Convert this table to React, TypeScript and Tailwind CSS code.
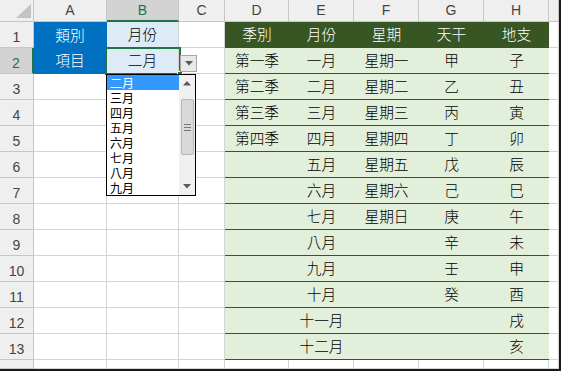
import React from 'react';

const COLS = ['A', 'B', 'C', 'D', 'E', 'F', 'G', 'H', ''];

const TABLE: string[][] = [
  ['季別', '月份', '星期', '天干', '地支'],
  ['第一季', '一月', '星期一', '甲', '子'],
  ['第二季', '二月', '星期二', '乙', '丑'],
  ['第三季', '三月', '星期三', '丙', '寅'],
  ['第四季', '四月', '星期四', '丁', '卯'],
  ['', '五月', '星期五', '戊', '辰'],
  ['', '六月', '星期六', '己', '巳'],
  ['', '七月', '星期日', '庚', '午'],
  ['', '八月', '', '辛', '未'],
  ['', '九月', '', '壬', '申'],
  ['', '十月', '', '癸', '酉'],
  ['', '十一月', '', '', '戌'],
  ['', '十二月', '', '', '亥'],
];

const LIST = ['二月', '三月', '四月', '五月', '六月', '七月', '八月', '九月'];

function cellFor(r: number, c: number) {
  // r: 1..14 sheet row, c: 0..8 column index (A..I)
  if (r <= 13 && c >= 3 && c <= 7) {
    const text = TABLE[r - 1][c - 3];
    if (r === 1) {
      return { cls: 'bg-[#375623] text-white border-b border-[#375623]', text };
    }
    return { cls: 'bg-[#E2EFDA] text-black border-b border-[#375623]', text };
  }
  if (c === 0 && r === 1) return { cls: 'bg-[#0070C0] text-white border-r border-[#0070C0]', text: '類別' };
  if (c === 0 && r === 2) return { cls: 'bg-[#0070C0] text-white border-r border-b border-[#0070C0]', text: '項目' };
  if (c === 1 && r === 1) return { cls: 'bg-[#DDEBF7] text-black border-r border-b border-[#D4D4D4]', text: '月份' };
  if (c === 1 && r === 2) return { cls: 'bg-[#DDEBF7] text-black border-r border-b border-[#D4D4D4]', text: '二月' };
  return { cls: 'bg-white border-r border-b border-[#D4D4D4]', text: '' };
}

function TriDown() {
  return (
    <svg width="8" height="5" viewBox="0 0 8 5">
      <polygon points="0,0 8,0 4,4.5" fill="#5a5a5a" />
    </svg>
  );
}

function TriUp() {
  return (
    <svg width="8" height="5" viewBox="0 0 8 5">
      <polygon points="0,4.5 8,4.5 4,0" fill="#5a5a5a" />
    </svg>
  );
}

export default function App() {
  const rows = Array.from({ length: 14 }, (_, i) => i + 1);

  return (
    <div className="w-[561px] h-[371px] bg-white border-r-2 border-b-2 border-[#1a1a1a] overflow-hidden font-light font-['Noto_Sans_CJK_TC','Noto_Sans_CJK_JP',sans-serif]">
      <div className="relative grid grid-cols-[34px_73px_72px_46px_64px_65px_65px_65px_65px_10px] grid-rows-[22px_repeat(13,26px)_9px]">
        {/* corner */}
        <div className="relative bg-[#EFEFEF] border-r border-b border-[#C6C6C6]">
          <svg className="absolute right-[2px] bottom-[3px]" width="15" height="14" viewBox="0 0 15 14">
            <polygon points="15,0 15,14 0,14" fill="#C3C3C3" />
          </svg>
        </div>

        {/* column headers */}
        {COLS.map((col, i) => (
          <div
            key={'h' + i}
            className={
              i === 1
                ? 'flex items-center justify-center bg-[#D3D3D3] border-r border-[#C6C6C6] border-b-2 border-b-[#217346] text-[#217346] text-[14px] font-normal font-["Liberation_Sans",sans-serif]'
                : 'flex items-center justify-center bg-[#EFEFEF] border-r border-b border-[#C6C6C6] text-[#444444] text-[14px] font-normal font-["Liberation_Sans",sans-serif]'
            }
          >
            {col}
          </div>
        ))}

        {rows.map((r) => (
          <React.Fragment key={'r' + r}>
            <div
              className={
                r === 2
                  ? 'flex items-end justify-center pb-[3px] bg-[#D3D3D3] border-b border-[#C6C6C6] border-r-2 border-r-[#217346] text-[#217346] text-[14px] leading-none font-normal font-["Liberation_Sans",sans-serif]'
                  : 'flex items-end justify-center pb-[3px] bg-[#EFEFEF] border-r border-b border-[#C6C6C6] text-[#444444] text-[14px] leading-none font-normal font-["Liberation_Sans",sans-serif]'
              }
            >
              {r < 14 ? r : ''}
            </div>
            {COLS.map((_, c) => {
              const cell = cellFor(r, c);
              return (
                <div
                  key={'c' + r + '-' + c}
                  className={'flex items-center justify-center text-[14.7px] leading-none ' + cell.cls}
                >
                  {cell.text}
                </div>
              );
            })}
          </React.Fragment>
        ))}

        {/* selection on B2 */}
        <div className="absolute left-[105px] top-[47px] w-[76px] h-[28px] border-2 border-[#217346]" />
        <div className="absolute left-[177px] top-[71px] w-[6px] h-[6px] bg-[#217346] border border-white" />

        {/* dropdown arrow button */}
        <div className="absolute left-[180px] top-[55px] w-[17px] h-[17px] bg-[#E9E9E9] border border-[#A6A6A6] flex items-center justify-center">
          <TriDown />
        </div>

        {/* dropdown list */}
        <div className="absolute left-[106px] top-[74px] w-[90px] h-[122px] bg-white border border-black flex">
          <div className="w-[72px] flex flex-col">
            {LIST.map((m, i) => (
              <div
                key={m}
                className={
                  i === 0
                    ? 'h-[15px] pl-[3px] bg-[#3399FF] text-white text-[12px] leading-[15px] font-normal'
                    : 'h-[15px] pl-[3px] text-black text-[12px] leading-[15px] font-normal'
                }
              >
                {m}
              </div>
            ))}
          </div>
          <div className="flex-1 bg-[#F0F0F0] flex flex-col items-center">
            <div className="h-[17px] flex items-center justify-center">
              <TriUp />
            </div>
            <div className="mt-[7px] w-[13px] h-[56px] bg-[#D9D9D9] border border-[#B5B5B5] rounded-[2px] flex flex-col items-center justify-center gap-[2px]">
              <div className="w-[7px] h-px bg-[#777777]" />
              <div className="w-[7px] h-px bg-[#777777]" />
              <div className="w-[7px] h-px bg-[#777777]" />
            </div>
            <div className="mt-auto h-[17px] flex items-center justify-center">
              <TriDown />
            </div>
          </div>
        </div>
      </div>
    </div>
  );
}
